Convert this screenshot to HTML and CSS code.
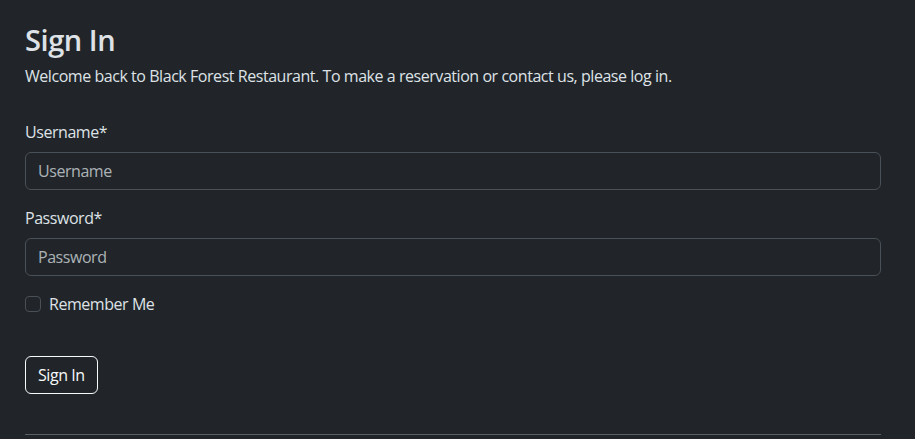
FILE: index.html
```html
<!DOCTYPE html>
<html lang="en">
<head>
<meta charset="utf-8">
<title>Sign In</title>
<link rel="stylesheet" href="styles.css">
</head>
<body>
<main class="container">
  <h2 class="title">Sign In</h2>
  <p class="lead-text">Welcome back to Black Forest Restaurant. To make a reservation or contact us, please log in.</p>
  <form class="login-form">
    <div class="field">
      <label class="field-label" for="username">Username*</label>
      <input class="field-input" id="username" type="text" placeholder="Username">
    </div>
    <div class="field">
      <label class="field-label" for="password">Password*</label>
      <input class="field-input" id="password" type="password" placeholder="Password">
    </div>
    <div class="check-row">
      <input class="check-box" id="remember" type="checkbox">
      <label class="check-label" for="remember">Remember Me</label>
    </div>
    <button class="btn-outline" type="submit">Sign In</button>
  </form>
  <hr class="divider">
</main>
</body>
</html>
```

FILE: styles.css
```css
html, body {
  margin: 0;
  padding: 0;
  background: #212529;
  color: #dee2e6;
  font-family: "Open Sans", "Noto Sans", sans-serif;
  font-size: 16px;
  line-height: 1.5;
  letter-spacing: -0.45px;
}

.container {
  width: 856px;
  padding: 23px 0 0 25px;
}

.title {
  margin: 0 0 6px;
  font-size: 29px;
  font-weight: 600;
  line-height: 1.2;
  color: #dee2e6;
}

.lead-text {
  margin: 0 0 32px;
}

.login-form {
  display: flex;
  flex-direction: column;
  align-items: flex-start;
}

.field {
  display: flex;
  flex-direction: column;
  width: 100%;
  margin-bottom: 16px;
}

.field-label {
  margin-bottom: 8px;
}

.field-input {
  box-sizing: border-box;
  width: 100%;
  height: 38px;
  padding: 6px 12px;
  border: 1px solid #495057;
  border-radius: 6px;
  background: #212529;
  color: #dee2e6;
  font: inherit;
  letter-spacing: inherit;
}

.field-input::placeholder {
  color: rgba(222, 226, 230, 0.75);
}

.check-row {
  display: flex;
  align-items: center;
  gap: 8px;
  height: 24px;
  margin-bottom: 40px;
}

.check-box {
  appearance: none;
  width: 16px;
  height: 16px;
  margin: 0;
  border: 1px solid #495057;
  border-radius: 4px;
  background: #212529;
}

.btn-outline {
  box-sizing: border-box;
  height: 38px;
  padding: 6px 12px;
  border: 1px solid #f8f9fa;
  border-radius: 6px;
  background: transparent;
  color: #f8f9fa;
  font: inherit;
  letter-spacing: inherit;
}

.divider {
  margin: 40px 0 0;
  border: 0;
  border-top: 1px solid #5b5f63;
  height: 0;
}
```
